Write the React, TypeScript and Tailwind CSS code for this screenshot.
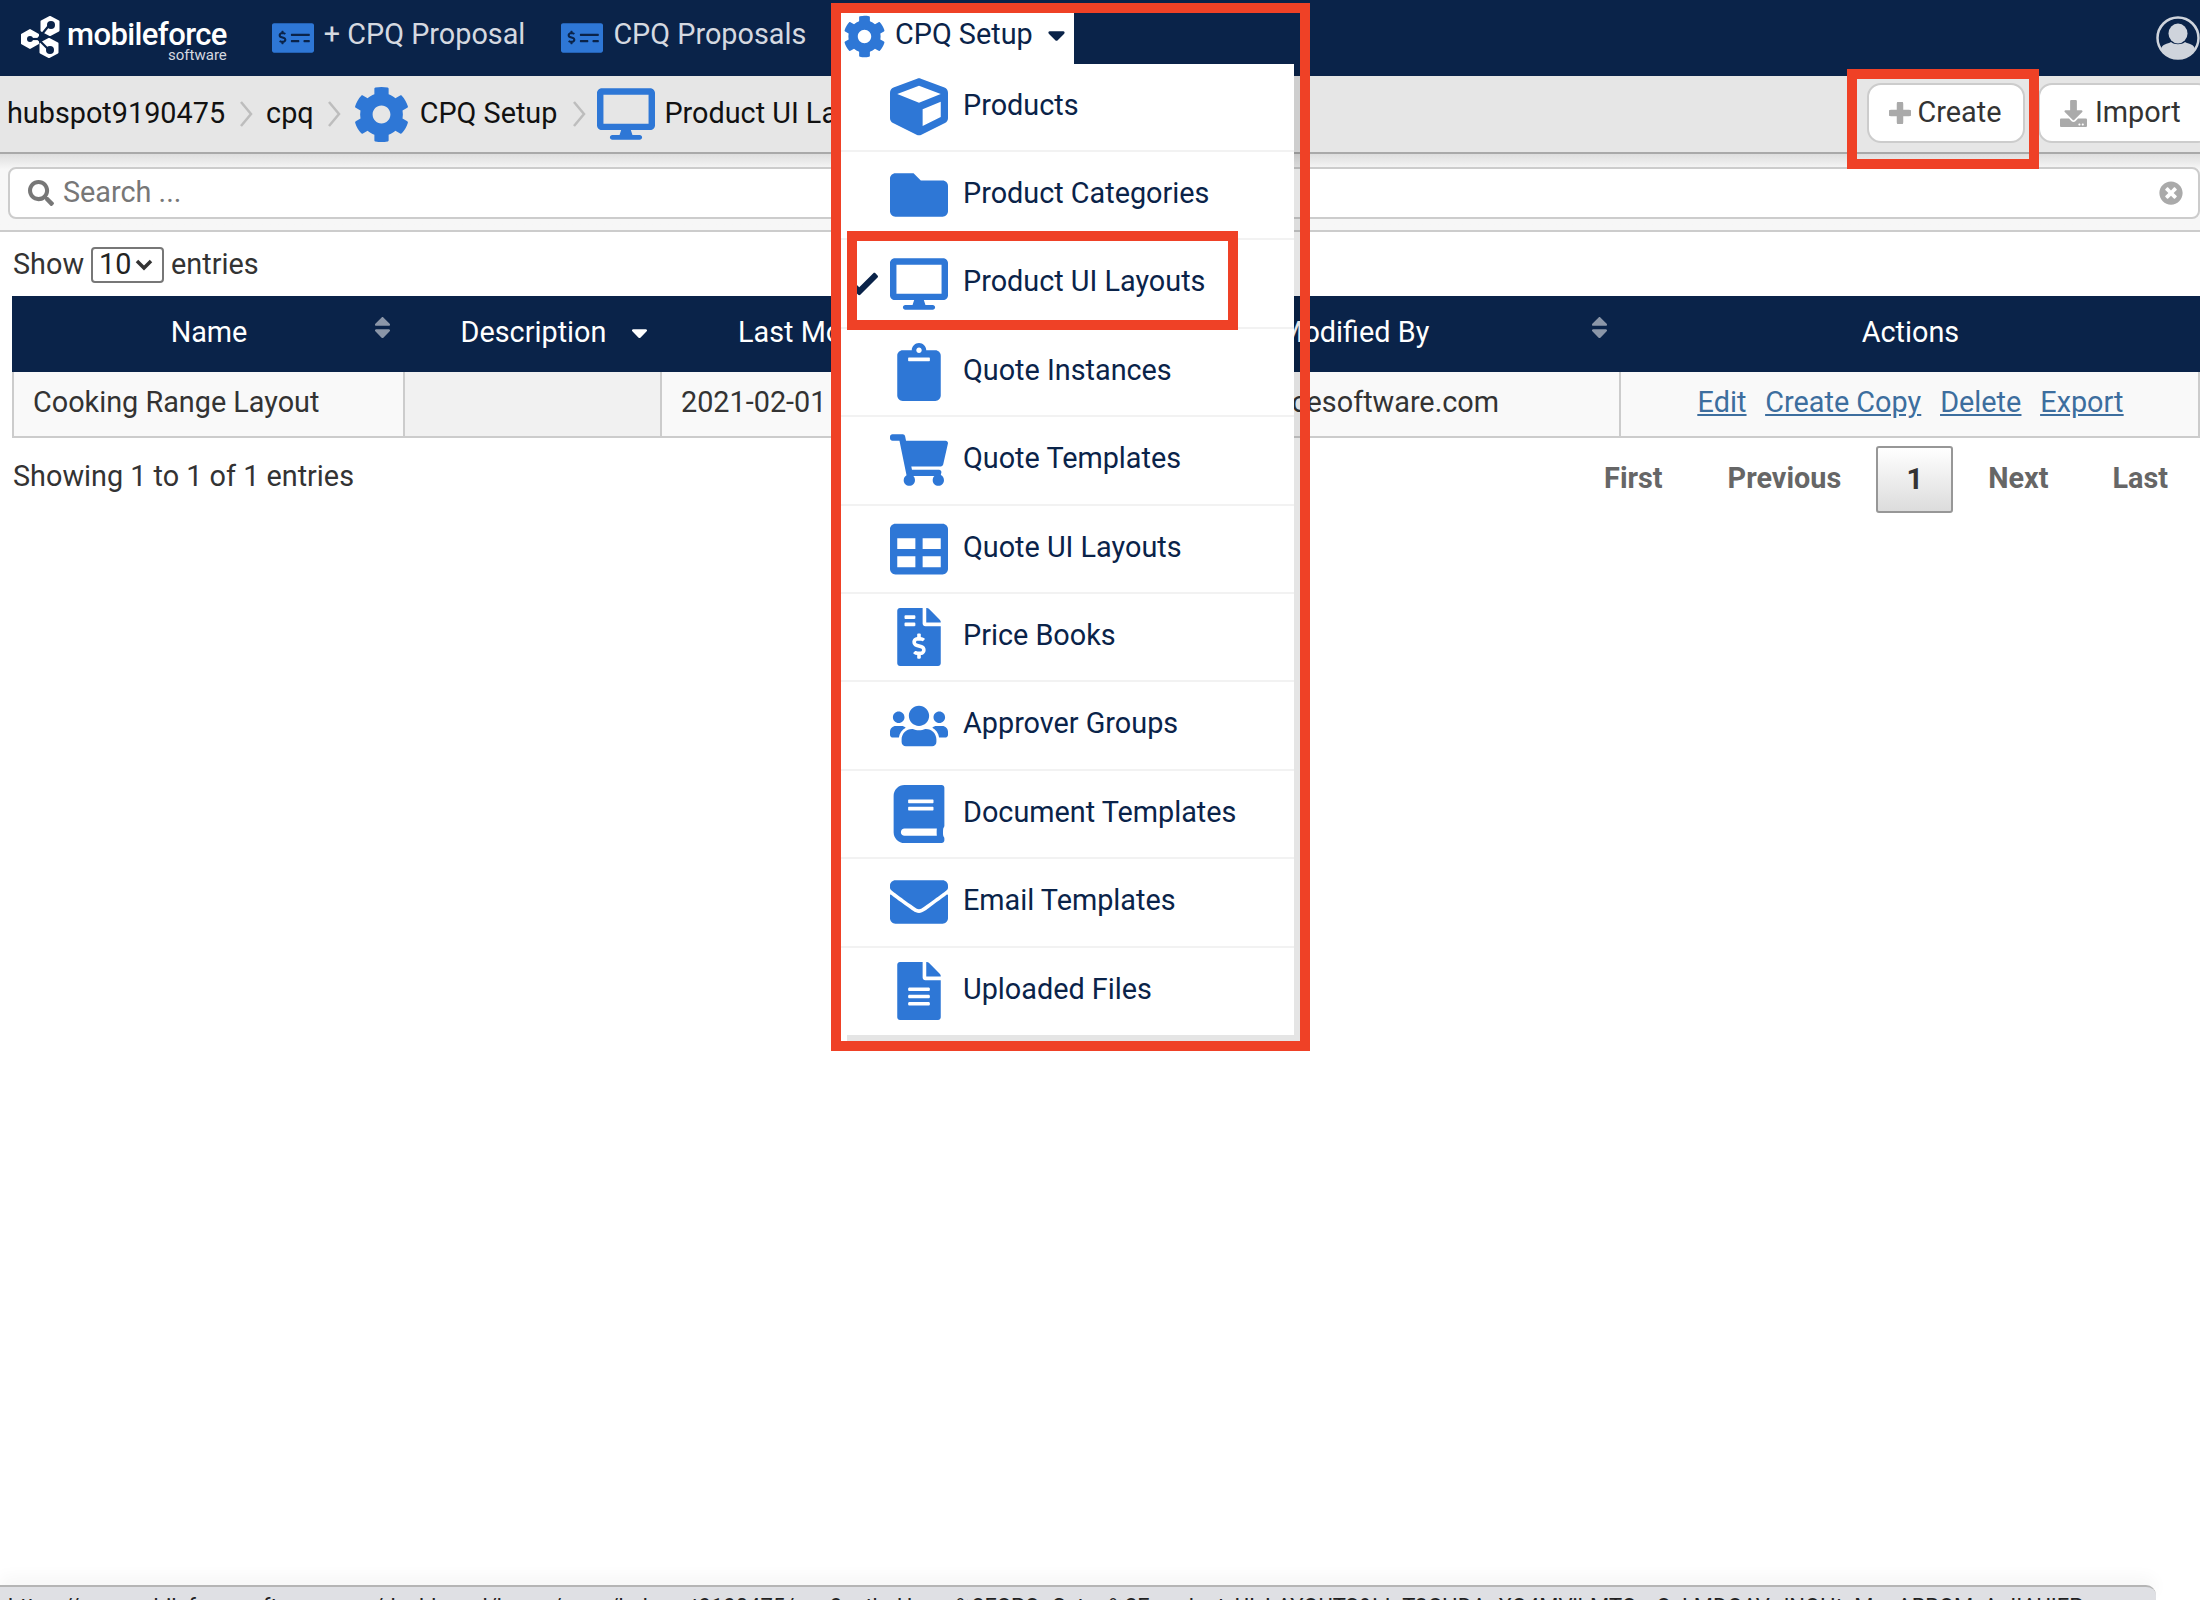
import {
  FaBook,
  FaCheck,
  FaCog,
  FaCube,
  FaDesktop,
  FaDownload,
  FaEnvelope,
  FaFileAlt,
  FaFileInvoiceDollar,
  FaFolder,
  FaClipboard,
  FaMoneyCheckAlt,
  FaSearch,
  FaShoppingCart,
  FaSort,
  FaSortDown,
  FaTable,
  FaTimesCircle,
  FaUsers,
} from "react-icons/fa";

const menuItems = [
  { label: "Products", icon: FaCube },
  { label: "Product Categories", icon: FaFolder },
  { label: "Product UI Layouts", icon: FaDesktop, checked: true },
  { label: "Quote Instances", icon: FaClipboard },
  { label: "Quote Templates", icon: FaShoppingCart },
  { label: "Quote UI Layouts", icon: FaTable },
  { label: "Price Books", icon: FaFileInvoiceDollar },
  { label: "Approver Groups", icon: FaUsers },
  { label: "Document Templates", icon: FaBook },
  { label: "Email Templates", icon: FaEnvelope },
  { label: "Uploaded Files", icon: FaFileAlt },
];

function Chevron() {
  return (
    <svg width="14" height="26" viewBox="0 0 14 26" className="shrink-0">
      <polyline points="2,1 12,13 2,25" fill="none" stroke="#bdbdbd" strokeWidth="2.5" />
    </svg>
  );
}

function Logo() {
  return (
    <svg width="44" height="48" viewBox="0 0 44 48" className="shrink-0">
      <g fill="#ffffff" stroke="#ffffff" strokeWidth="2" strokeLinejoin="round">
        <polygon points="30,3 38.500,7.500 38.500,16.500 30,21 21.500,16.500 21.500,7.500" />
        <polygon points="10,16 18,20.500 18,29.500 10,34 2,29.500 2,20.500" />
        <polygon points="29,25 37.500,29.500 37.500,38.500 29,43 20.500,38.500 20.500,29.500" />
      </g>
      <g fill="none" stroke="#0a2349" strokeWidth="2.2">
        <polyline points="31,9 18,25 30,37" />
        <line x1="18" y1="25" x2="9" y2="25" />
      </g>
      <g fill="#0a2349">
        <circle cx="31" cy="11" r="4" />
        <circle cx="30" cy="36" r="4" />
        <circle cx="10" cy="25" r="3" />
      </g>
    </svg>
  );
}

function UserIcon() {
  return (
    <svg width="44" height="44" viewBox="0 0 44 44" className="shrink-0">
      <defs>
        <clipPath id="user-ring">
          <circle cx="22" cy="22" r="20" />
        </clipPath>
      </defs>
      <circle cx="22" cy="22" r="20.500" fill="#0a2349" stroke="#cfd4dc" strokeWidth="2.500" />
      <ellipse cx="22" cy="17.500" rx="9.500" ry="10" fill="#cfd4dc" />
      <path
        d="M5 44 V34 C5 28 12 28 15 26 C18 29 26 29 29 26 C32 28 39 28 39 34 V44 Z"
        fill="#cfd4dc"
        clipPath="url(#user-ring)"
      />
    </svg>
  );
}

function PlusIcon() {
  return (
    <svg width="22" height="22" viewBox="0 0 22 22" className="shrink-0">
      <path d="M11 2 V20 M2 11 H20" fill="none" stroke="#aaaaaa" strokeWidth="6.500" strokeLinecap="round" />
    </svg>
  );
}

function TopNav() {
  return (
    <nav className="h-[76px] shrink-0 bg-[#0a2349] flex items-center text-[28.8px] text-[#d5d9e0]">
      <div className="ml-[20px] flex items-center">
        <Logo />
        <div className="ml-[3px] mt-[8px] flex flex-col items-end text-white">
          <span className="text-[31px] leading-[26px] font-medium tracking-[-0.6px]">mobileforce</span>
          <span className="text-[15px] leading-[15px] text-[#d5d9e0]">software</span>
        </div>
      </div>
      <FaMoneyCheckAlt size={42} className="ml-[45px] text-[#2e77d6]" />
      <span className="ml-[10px] -mt-[6px]">+ CPQ Proposal</span>
      <FaMoneyCheckAlt size={42} className="ml-[36px] text-[#2e77d6]" />
      <span className="ml-[10px] -mt-[6px]">CPQ Proposals</span>
      <div className="ml-auto mr-0">
        <UserIcon />
      </div>
    </nav>
  );
}

function Breadcrumbs() {
  return (
    <div className="h-[78px] shrink-0 bg-[#e6e6e6] border-b-2 border-[#a9a9a9] flex items-center text-[28.8px] text-[#111]">
      <span className="ml-[7px]">hubspot9190475</span>
      <span className="ml-[14px]"><Chevron /></span>
      <span className="ml-[13px]">cpq</span>
      <span className="ml-[13px]"><Chevron /></span>
      <FaCog size={57} className="ml-[12px] text-[#2e77d6]" />
      <span className="ml-[10px]">CPQ Setup</span>
      <span className="ml-[15px]"><Chevron /></span>
      <FaDesktop size={58} className="ml-[11px] text-[#2e77d6]" />
      <span className="ml-[9px]">Product UI Layouts</span>
      <div className="ml-auto flex items-center gap-[13px] -mr-[12px] -mt-[2px]">
        <button className="w-[158px] h-[60px] bg-white border-2 border-[#ccc] rounded-[14px] flex items-center justify-center gap-[7px] pr-[2px] text-[#333]">
          <PlusIcon />
          Create
        </button>
        <button className="w-[174px] h-[60px] bg-white border-2 border-[#ccc] rounded-[14px] flex items-center pl-[20px] gap-[8px] text-[#333]">
          <FaDownload size={27} className="text-[#aaa]" />
          Import
        </button>
      </div>
    </div>
  );
}

function SearchBar() {
  return (
    <div className="h-[78px] shrink-0 bg-gradient-to-b from-[#dedede] via-[#f7f7f7] via-[20%] to-[#f7f7f7] border-b-2 border-[#ccc] pt-[13px] pl-[8px]">
      <div className="h-[52px] bg-white border-2 border-[#ccc] rounded-[8px] flex items-center pl-[18px] pr-[15px] text-[28.8px] text-[#777]">
        <FaSearch size={26} />
        <span className="ml-[9px]">Search ...</span>
        <FaTimesCircle size={24} className="ml-auto text-[#aaa]" />
      </div>
    </div>
  );
}

function HeaderCell({ label, sort, labelClass }: { label: string; sort?: "both" | "down"; labelClass?: string }) {
  return (
    <div className="relative flex items-center justify-center">
      <span className={labelClass}>{label}</span>
      {sort === "both" && (
        <FaSort size={27} className="absolute right-[8px] top-[18px] text-[#8b96a8]" />
      )}
      {sort === "down" && (
        <FaSortDown size={27} className="absolute right-[8px] top-[18px] text-white" />
      )}
    </div>
  );
}

function EntriesTable() {
  return (
    <div className="ml-[12px] text-[28.8px]">
      <div className="h-[76px] bg-[#0a2349] text-white grid grid-cols-[392px_257px_329px_631px_579px]">
        <HeaderCell label="Name" sort="both" labelClass="-mt-[2px] ml-[2px]" />
        <HeaderCell label="Description" sort="down" labelClass="-mt-[2px] ml-[2px]" />
        <HeaderCell label="Last Modified" sort="both" labelClass="-mt-[2px]" />
        <HeaderCell label="Last Modified By" sort="both" labelClass="-mt-[2px] ml-[34px]" />
        <HeaderCell label="Actions" labelClass="-mt-[2px]" />
      </div>
      <div className="h-[66px] border-b-2 border-l-2 border-r-2 border-[#ccc] text-[#333] grid grid-cols-[391px_257px_329px_630px_577px]">
        <div className="bg-[#f9f9f9] border-r-2 border-[#ccc] flex items-center pl-[19px] pb-[2px]">Cooking Range Layout</div>
        <div className="bg-[#f1f1f1] border-r-2 border-[#ccc]" />
        <div className="bg-[#f9f9f9] border-r-2 border-[#ccc] flex items-center pl-[19px] pb-[2px] whitespace-nowrap overflow-hidden">2021-02-01 11:32:09</div>
        <div className="bg-[#f9f9f9] border-r-2 border-[#ccc] flex items-center justify-end pr-[120px] pb-[2px]">admin@mobileforcesoftware.com</div>
        <div className="bg-[#f9f9f9] flex items-center justify-center gap-[19px] pb-[2px] pl-[2px] text-[#3d6e9e] underline">
          <a href="#">Edit</a>
          <a href="#">Create Copy</a>
          <a href="#">Delete</a>
          <a href="#">Export</a>
        </div>
      </div>
    </div>
  );
}

function TableFooter() {
  return (
    <div className="mt-[8px] pl-[13px] flex items-center justify-between text-[28.8px] text-[#333]">
      <span className="-mt-[6px]">Showing 1 to 1 of 1 entries</span>
      <div className="flex items-center font-bold text-[#666]">
        <a className="pl-[32px] pr-[33px] -mt-[2px]">First</a>
        <a className="px-[32px] -mt-[2px]">Previous</a>
        <a className="mx-[3px] w-[77px] h-[67px] border-2 border-[#979797] rounded-[3px] bg-gradient-to-b from-white to-[#dcdcdc] flex items-center justify-center text-[#333]">1</a>
        <a className="px-[32px] -mt-[2px]">Next</a>
        <a className="pl-[32px] pr-[32px] -mt-[2px]">Last</a>
      </div>
    </div>
  );
}

function CpqSetupMenu() {
  return (
    <div className="absolute left-[841px] top-[13px] w-[453px]">
      <div className="w-[233px] h-[51px] bg-white flex items-center text-[28.8px] text-[#0a2349]">
        <FaCog size={43} className="ml-[2px] -mt-[4px] text-[#2e77d6]" />
        <span className="ml-[9px] -mt-[7px]">CPQ Setup</span>
        <FaSortDown size={29} className="ml-[9px] -mt-[18px]" />
      </div>
      <ul className="bg-white shadow-[6px_6px_0_rgba(0,0,0,0.1)]">
        {menuItems.map((item) => (
          <li
            key={item.label}
            className="h-[88.4px] first:h-[88px] last:h-[87px] border-b-2 border-[#f2f2f2] last:border-b-0 flex items-center text-[28.8px] text-[#0a2349]"
          >
            <span className="w-[37px] flex justify-end">
              {item.checked && <FaCheck size={30} className="text-[#0a2349]" />}
            </span>
            <span className="ml-[12px] w-[58px] flex justify-center">
              <item.icon size={58} className="text-[#2e77d6]" />
            </span>
            <span className="ml-[15px] -mt-[3px]">{item.label}</span>
          </li>
        ))}
      </ul>
    </div>
  );
}

export default function App() {
  return (
    <div className="relative w-[2200px] h-[1600px] overflow-hidden bg-white font-['Roboto',sans-serif] flex flex-col">
      <TopNav />
      <Breadcrumbs />
      <SearchBar />

      <div className="h-[64px] shrink-0 pl-[13px] pt-[2px] flex items-center text-[28.8px] text-[#333]">
        Show
        <span className="mx-[7px] w-[73px] h-[36px] border-2 border-[#777] rounded-[4px] flex items-center pl-[6px] text-[#222]">
          10
          <svg width="18" height="12" viewBox="0 0 18 12" className="ml-[4px]">
            <polyline points="2,2 9,9 16,2" fill="none" stroke="#333" strokeWidth="3.5" />
          </svg>
        </span>
        entries
      </div>

      <EntriesTable />
      <TableFooter />

      {/* browser status bar */}
      <div className="mt-auto h-[15px] w-[2156px] shrink-0 bg-[#dfe0e4] border-t-2 border-[#b5b5b5] rounded-tr-[10px] shadow-[0_-8px_16px_rgba(0,0,0,0.04)] pl-[8px] pt-[9px] text-[22px] leading-none text-[#222] whitespace-nowrap overflow-hidden">
        https://app.mobileforcesoftware.com/dashboard/home/apps/hubspot9190475/cpq?path=Home%2FCPQ+Setup%2Fproduct_UI_LAYOUTS&amp;id=T3CHDAaXQ4MVjbMTQmQvLMDOAVrdNQHtsMneABROMyAnIIAUIEP
      </div>

      <CpqSetupMenu />

      {/* annotation boxes */}
      <div className="absolute left-[831px] top-[3px] w-[479px] h-[1048px] border-[10px] border-[#ef4126]" />
      <div className="absolute left-[847px] top-[231px] w-[391px] h-[99px] border-[10px] border-[#ef4126]" />
      <div className="absolute left-[1847px] top-[69px] w-[192px] h-[100px] border-[10px] border-[#ef4126]" />
    </div>
  );
}
